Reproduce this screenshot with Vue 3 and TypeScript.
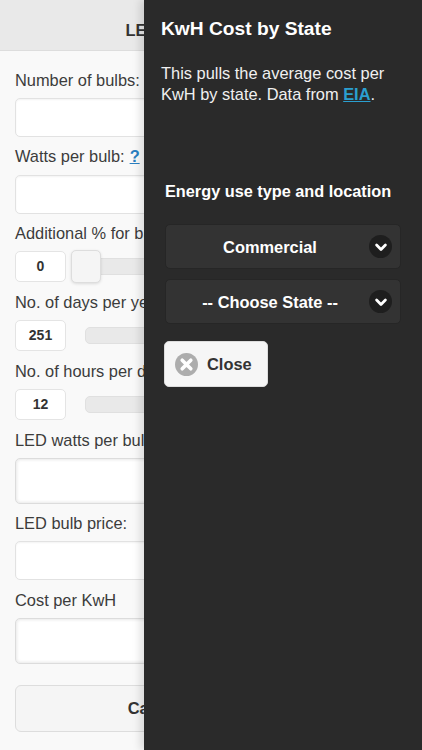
<script setup lang="ts">
interface Row { label: string; help?: boolean; kind: 'input' | 'slider'; value?: string; tall?: boolean; handle?: boolean }
const rows: Row[] = [
  { label: 'Number of bulbs:', kind: 'input' },
  { label: 'Watts per bulb:', help: true, kind: 'input' },
  { label: 'Additional % for ballast:', kind: 'slider', value: '0', handle: true },
  { label: 'No. of days per year:', kind: 'slider', value: '251' },
  { label: 'No. of hours per day:', kind: 'slider', value: '12' },
  { label: 'LED watts per bulb:', kind: 'input', tall: true },
  { label: 'LED bulb price:', kind: 'input' },
  { label: 'Cost per KwH', kind: 'input', tall: true },
]
const selects = ['Commercial', '-- Choose State --']
</script>

<template>
  <div class="screen">
    <header class="bar">LED Lights Calculator</header>
    <main class="form">
      <div v-for="r in rows" :key="r.label" class="field" :class="{ 'slider-field': r.kind === 'slider' }">
        <div class="label">{{ r.label }}<a v-if="r.help" class="help">?</a></div>
        <div v-if="r.kind === 'input'" class="input" :class="{ tall: r.tall }"></div>
        <div v-else class="slider">
          <div class="num">{{ r.value }}</div>
          <div class="track"></div>
          <div v-if="r.handle" class="handle"></div>
        </div>
      </div>
      <button class="calc">Calculate My Savings</button>
    </main>
    <aside class="panel">
      <h1 class="title">KwH Cost by State</h1>
      <p class="desc">This pulls the average cost per KwH by state. Data from <a class="link">EIA</a>.</p>
      <h2 class="sub">Energy use type and location</h2>
      <div v-for="s in selects" :key="s" class="select">
        <span class="select-text">{{ s }}</span>
        <span class="chev">
          <svg width="14" height="14" viewBox="0 0 14 14"><path d="M2.6 5 L7 9.4 L11.4 5" fill="none" stroke="#fff" stroke-width="2.8" stroke-linecap="round" stroke-linejoin="round"/></svg>
        </span>
      </div>
      <button class="close">
        <span class="x">
          <svg width="23" height="23" viewBox="0 0 23 23"><circle cx="11.5" cy="11.5" r="11.5" fill="#adadad"/><path d="M7.2 7.2 L15.8 15.8 M15.8 7.2 L7.2 15.8" stroke="#fff" stroke-width="3.6" stroke-linecap="round"/></svg>
        </span>
        Close
      </button>
    </aside>
  </div>
</template>

<style>
html, body { margin: 0; padding: 0; }
</style>

<style scoped>
.screen {
  position: relative;
  width: 422px;
  height: 750px;
  overflow: hidden;
  background: #f9f9f9;
  font-family: "Liberation Sans", Arial, sans-serif;
  color: #333;
}
.bar {
  height: 51px;
  box-sizing: border-box;
  background: #e9e9e9;
  border-bottom: 1px solid #ddd;
  font-weight: 700;
  font-size: 16.4px;
  line-height: 60px;
  text-align: center;
}
.form { padding: 19px 15px 0; }
.field { margin-bottom: 9.2px; }
.slider-field { margin-bottom: 9.6px; }
.label { font-size: 16.4px; line-height: 20px; height: 20px; margin-bottom: 8.3px; color: #3c3c3c; }
.help { margin-left: 5px; color: #2a7fc0; font-weight: 700; text-decoration: underline; }
.input {
  box-sizing: border-box;
  height: 39px;
  background: #fff;
  border: 1px solid #e2e2e2;
  border-radius: 5px;
  box-shadow: inset 0 1px 2px rgba(0,0,0,.05);
}
.input.tall { height: 46px; border-color: #dcdcdc; box-shadow: inset 0 0 3px 1px rgba(0,0,0,.09); }
.slider { position: relative; display: flex; align-items: center; height: 31px; }
.num {
  box-sizing: border-box;
  width: 51px;
  height: 31px;
  background: #fff;
  border: 1px solid #e4e4e4;
  border-radius: 5px;
  font-size: 14px;
  font-weight: 700;
  line-height: 29px;
  text-align: center;
}
.track {
  flex: 1;
  height: 17px;
  margin-left: 19px;
  background: #e9e9e9;
  border: 1px solid #e0e0e0;
  border-radius: 5px;
  box-sizing: border-box;
}
.handle {
  position: absolute;
  left: 56px;
  top: -1px;
  width: 30px;
  height: 33px;
  box-sizing: border-box;
  background: #f5f5f5;
  border: 1px solid #ddd;
  border-radius: 5px;
  box-shadow: 0 1px 3px rgba(0,0,0,.12);
}
.calc {
  display: block;
  width: 100%;
  height: 47px;
  margin-top: 21px;
  padding: 0 0 0 1px;
  background: #f5f5f5;
  border: 1px solid #ddd;
  border-radius: 6px;
  font: 700 16.4px "Liberation Sans", Arial, sans-serif;
  color: #333;
}
.panel {
  position: absolute;
  top: 0;
  right: 0;
  bottom: 0;
  width: 278px;
  box-sizing: border-box;
  padding: 17px 21px 0 17px;
  background: #2a2a2a;
  color: #fff;
  box-shadow: -4px 0 8px rgba(0,0,0,.12);
}
.title { margin: 0; font-size: 19.2px; line-height: 24px; font-weight: 700; }
.desc { margin: 22px 0 0; font-size: 16.4px; line-height: 21px; color: #f0f0f0; }
.link { color: #2a9fd0; font-weight: 700; text-decoration: underline; }
.sub { margin: 76px 0 23px 4px; font-size: 16.3px; line-height: 20px; font-weight: 700; }
.select {
  position: relative;
  box-sizing: border-box;
  height: 45px;
  margin: 0 0 10px 4px;
  background: #333;
  border: 1px solid #262626;
  border-radius: 5px;
  font-size: 16.4px;
  font-weight: 700;
  line-height: 45px;
  text-align: center;
}
.select-text { display: block; padding-right: 26px; }
.chev {
  position: absolute;
  right: 8px;
  top: 10px;
  display: flex;
  align-items: center;
  justify-content: center;
  width: 23px;
  height: 23px;
  border-radius: 50%;
  background: #1e1e1e;
}
.close {
  display: flex;
  align-items: center;
  gap: 9px;
  box-sizing: border-box;
  width: 104px;
  height: 46px;
  margin: 17px 0 0 3px;
  padding: 0 0 0 10px;
  background: #f6f6f6;
  border: 1px solid #ddd;
  border-radius: 5px;
  font: 700 16.4px "Liberation Sans", Arial, sans-serif;
  color: #333;
}
.x { display: flex; }
</style>
